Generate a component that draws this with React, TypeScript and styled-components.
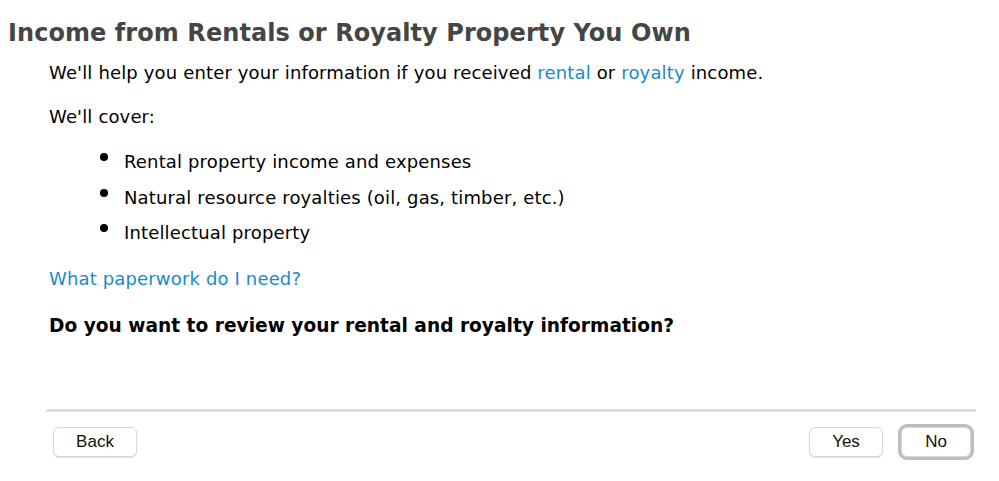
import React from "react";
import styled, { createGlobalStyle } from "styled-components";

const GlobalStyle = createGlobalStyle`
  html, body {
    margin: 0;
    padding: 0;
    background: #ffffff;
  }
  body {
    font-family: "DejaVu Sans", "Noto Sans", sans-serif;
    color: #000;
  }
`;

const Page = styled.div`
  width: 999px;
  height: 481px;
  display: flex;
  flex-direction: column;
  box-sizing: border-box;
  padding-top: 18px;
`;

const Title = styled.h1`
  margin: 0 0 0 8px;
  font-size: 24px;
  line-height: 30px;
  letter-spacing: 0.07px;
  font-weight: 700;
  color: #454545;
`;

const Content = styled.div`
  padding: 0 0 0 49px;
  display: flex;
  flex-direction: column;
  flex: 1;
`;

const Paragraph = styled.p<{ $top?: number }>`
  margin: ${(p) => p.$top ?? 0}px 0 0 0;
  font-size: 18px;
  line-height: 24px;
  letter-spacing: 0.15px;
`;

const Link = styled.a`
  color: #178ad3;
  text-decoration: none;
  cursor: pointer;
`;

const List = styled.ul`
  margin: 21px 0 0 0;
  padding: 0 0 0 75px;
  list-style: none;
  display: flex;
  flex-direction: column;
  gap: 11.5px;
`;

const Item = styled.li`
  position: relative;
  font-size: 18px;
  line-height: 24px;
  letter-spacing: 0.15px;

  &::before {
    content: "";
    position: absolute;
    left: -24px;
    top: 3px;
    width: 8px;
    height: 8px;
    border-radius: 50%;
    background: #000;
  }
`;

const Question = styled.h2`
  margin: 22px 0 0 0;
  font-size: 18.6px;
  line-height: 26px;
  font-weight: 700;
  color: #000;
`;

const Footer = styled.div`
  margin: auto 23px 0 46px;
  border-top: 3px solid #dedede;
  padding: 15px 5px 0 7px;
  height: 54px;
  display: flex;
  align-items: flex-start;
`;

const Spacer = styled.div`
  flex: 1;
`;

const Button = styled.button<{ $focused?: boolean; $w: number }>`
  font-family: "Liberation Sans", Arial, sans-serif;
  font-size: 17px;
  color: #111;
  background: #fff;
  width: ${(p) => p.$w}px;
  height: 30px;
  border: 1px solid #d6d6d6;
  border-radius: 6px;
  box-shadow: 0 1px 1px rgba(0, 0, 0, 0.12);
  margin-left: ${(p) => (p.$focused ? 18 : 0)}px;
  outline: ${(p) => (p.$focused ? "3px solid #bdbdbd" : "none")};
  outline-offset: 0;
  cursor: pointer;
`;

export default function App() {
  return (
    <Page>
      <GlobalStyle />
      <Title>Income from Rentals or Royalty Property You Own</Title>
      <Content>
        <Paragraph $top={13}>
          We'll help you enter your information if you received <Link>rental</Link> or{" "}
          <Link>royalty</Link> income.
        </Paragraph>
        <Paragraph $top={20}>We'll cover:</Paragraph>
        <List>
          <Item>Rental property income and expenses</Item>
          <Item>Natural resource royalties (oil, gas, timber, etc.)</Item>
          <Item>Intellectual property</Item>
        </List>
        <Paragraph $top={22}>
          <Link>What paperwork do I need?</Link>
        </Paragraph>
        <Question>Do you want to review your rental and royalty information?</Question>
      </Content>
      <Footer>
        <Button $w={84}>Back</Button>
        <Spacer />
        <Button $w={74}>Yes</Button>
        <Button $w={70} $focused>
          No
        </Button>
      </Footer>
    </Page>
  );
}
